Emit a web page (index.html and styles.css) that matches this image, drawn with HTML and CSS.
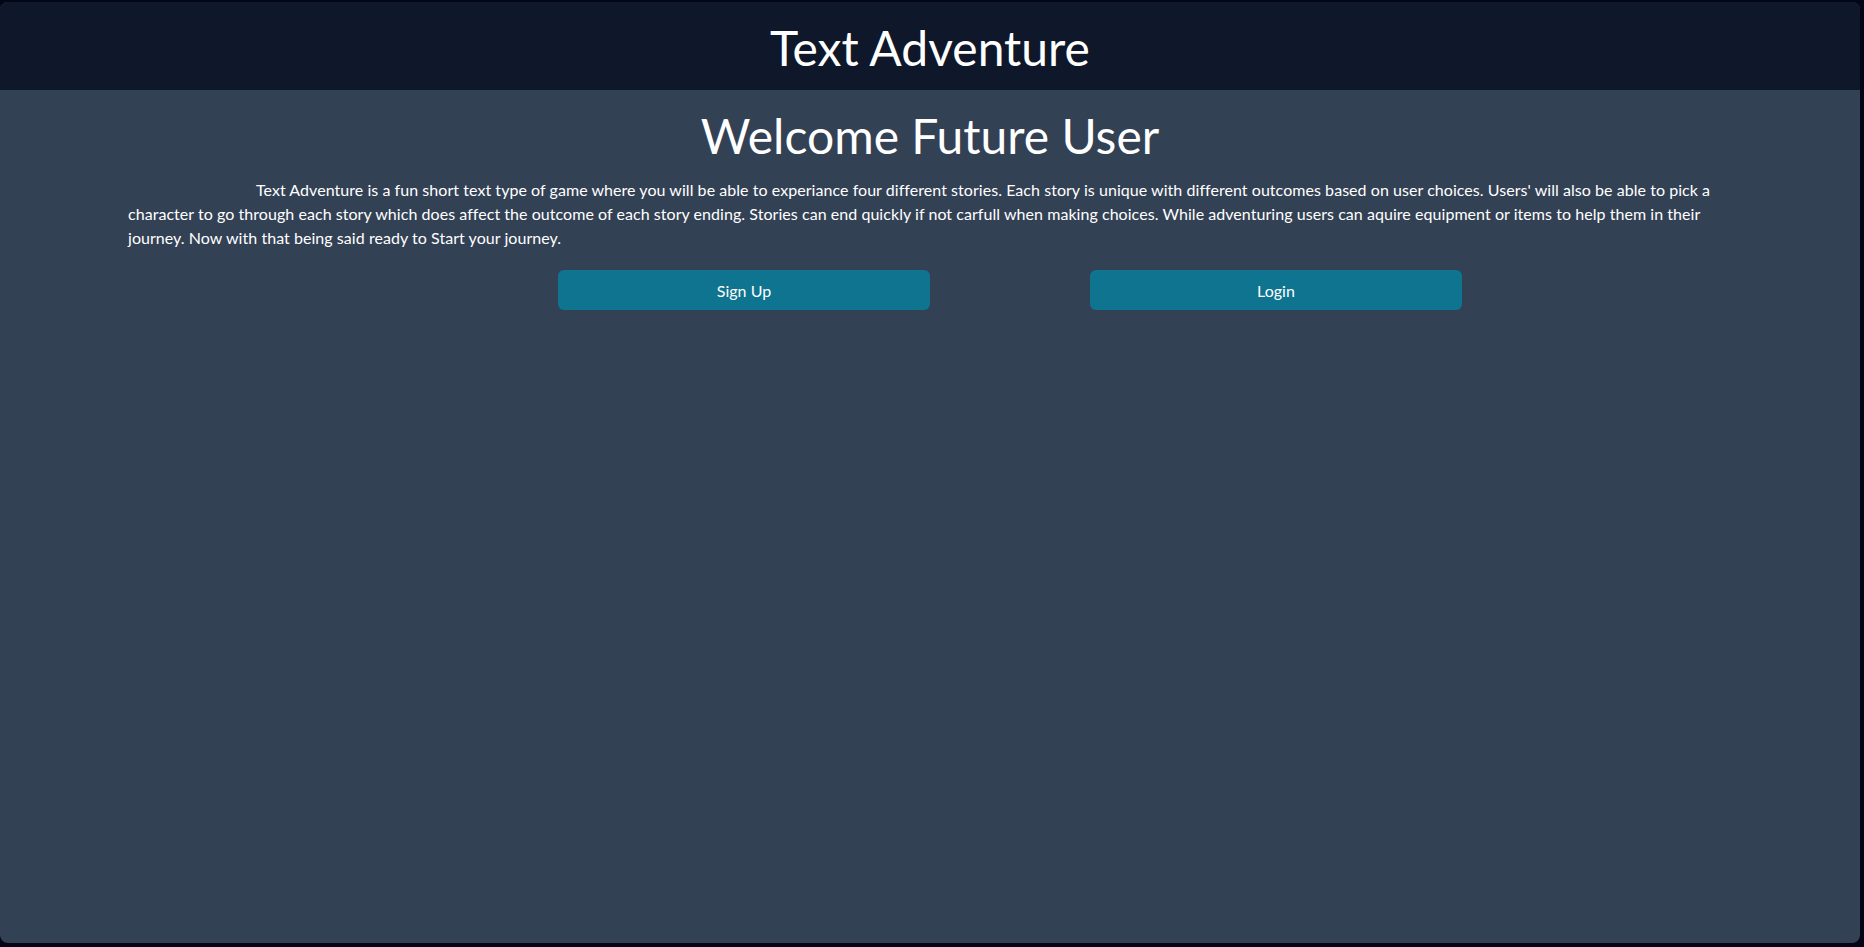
FILE: index.html
```html
<!DOCTYPE html>
<html lang="en">
<head>
<meta charset="utf-8">
<title>Text Adventure</title>
<link rel="stylesheet" href="styles.css">
</head>
<body>
<div class="frame">
  <header class="topbar">
    <h1 class="brand">Text Adventure</h1>
  </header>
  <main class="content">
    <h2 class="welcome">Welcome Future User</h2>
    <p class="intro">Text Adventure is a fun short text type of game where you will be able to experiance four different stories. Each story is unique with different outcomes based on user choices. Users' will also be able to pick a character to go through each story which does affect the outcome of each story ending. Stories can end quickly if not carfull when making choices. While adventuring users can aquire equipment or items to help them in their journey. Now with that being said ready to Start your journey.</p>
    <div class="actions">
      <button class="btn">Sign Up</button>
      <button class="btn">Login</button>
    </div>
  </main>
</div>
</body>
</html>
```
FILE: styles.css
```css
html, body {
  margin: 0;
  padding: 0;
  height: 100%;
}
body {
  background: #020617;
  font-family: Lato, "Noto Sans", sans-serif;
  color: #ffffff;
}
.frame {
  box-sizing: border-box;
  margin: 2px 4px 4px 0;
  height: calc(100% - 6px);
  background: #334155;
  border-radius: 8px;
  overflow: hidden;
  display: flex;
  flex-direction: column;
}
.topbar {
  background: #0f172a;
  padding: 22px 0 18px;
  text-align: center;
}
.brand {
  margin: 0;
  font-size: 48px;
  line-height: 48px;
  font-weight: 400;
}
.content {
  padding: 0 128px;
  text-align: center;
}
.welcome {
  margin: 0;
  padding-top: 18px;
  font-size: 48px;
  line-height: 56px;
  font-weight: 400;
}
.intro {
  margin: 14px 0 0;
  text-align: left;
  text-indent: 128px;
  font-size: 16px;
  line-height: 24px;
  letter-spacing: 0.05px;
}
.actions {
  display: flex;
  gap: 160px;
  margin-top: 20px;
  padding-left: 430px;
}
.btn {
  width: 372px;
  height: 40px;
  border: none;
  border-radius: 6px;
  background: #0e7490;
  color: #ffffff;
  font-family: inherit;
  font-size: 16px;
}
```
